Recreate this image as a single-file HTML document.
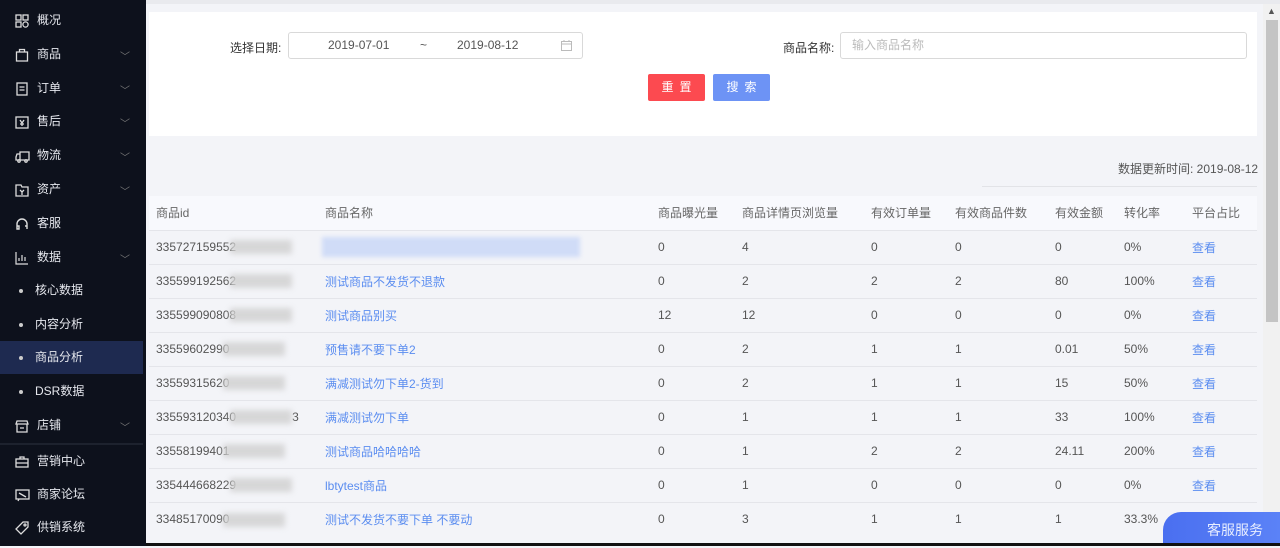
<!DOCTYPE html>
<html><head><meta charset="utf-8"><style>
*{margin:0;padding:0;box-sizing:border-box}
body{width:1280px;height:546px;overflow:hidden;background:#f3f4f8;font-family:"Liberation Sans","Noto Sans CJK SC",sans-serif;font-size:12px;color:#555;position:relative}
#side{position:absolute;left:0;top:0;width:146px;height:546px;background:#0d111c;color:#e6e8ee;font-size:12px}
.it{position:absolute;left:0;width:143px;height:33px;line-height:33px}
.it svg{position:absolute;left:15px;top:10px}
.it .t{position:absolute;left:37px}
.it .ar{position:absolute;left:120px;top:3px;color:#777;font-size:10px}
.sub .t{left:35px}
.sub .dot{position:absolute;left:19px;top:15px;width:4px;height:4px;border-radius:50%;background:#ccc}
.act{background:#1e2a50}
#card{position:absolute;left:149px;top:12px;width:1108px;height:124px;background:#fff}
.lbl{position:absolute;color:#333;font-size:12px}
.inp{position:absolute;border:1px solid #d9d9d9;border-radius:3px;background:#fff;height:27px;line-height:25px}
.btn{position:absolute;height:27px;line-height:27px;color:#fff;text-align:center;border-radius:2px;font-size:12px;letter-spacing:6px;text-indent:6px}
table{position:absolute;left:149px;top:196px;width:1108px;border-collapse:collapse;font-size:12px}
th{background:#f8f9fd;font-weight:normal;color:#666;height:34px;text-align:left;padding-left:7px}
td{height:34px;padding-left:7px;border-top:1px solid #e4e5ea;color:#555;white-space:nowrap;position:relative}
td.l{color:#5b8df0}
.bl{display:inline-block;width:62px;height:14px;background:#d2d2d2;filter:blur(3px);vertical-align:middle;margin-left:-6px;opacity:.85}
</style></head><body>
<div id="side">
<div class="it" style="top:4px"><svg width="14" height="14" fill="none" stroke="#ddd" stroke-width="1.3"><rect x="1" y="1" width="5" height="5"/><rect x="8" y="1" width="5" height="5"/><rect x="1" y="8" width="5" height="5"/><circle cx="10.5" cy="10.5" r="2.6"/></svg><span class="t">概况</span></div>
<div class="it" style="top:38px"><svg width="14" height="14" fill="none" stroke="#ddd" stroke-width="1.3"><path d="M1.5 4h11v9h-11z M4.5 4V1.5h5V4"/></svg><span class="t">商品</span><span class="ar">﹀</span></div>
<div class="it" style="top:72px"><svg width="14" height="14" fill="none" stroke="#ddd" stroke-width="1.3"><rect x="2" y="1" width="10" height="12"/><path d="M4.5 5h5M4.5 8h5"/></svg><span class="t">订单</span><span class="ar">﹀</span></div>
<div class="it" style="top:105px"><svg width="14" height="14" fill="none" stroke="#ddd" stroke-width="1.3"><rect x="1" y="2" width="12" height="11"/><path d="M5 5l2 3 2-3M7 8v3M5 9h4"/></svg><span class="t">售后</span><span class="ar">﹀</span></div>
<div class="it" style="top:139px"><svg width="15" height="14" fill="none" stroke="#ddd" stroke-width="1.3"><path d="M5 3h9v8H5zM5 5H2l-1 3v3h4"/><circle cx="4" cy="12" r="1.2"/><circle cx="11" cy="12" r="1.2"/></svg><span class="t">物流</span><span class="ar">﹀</span></div>
<div class="it" style="top:173px"><svg width="14" height="14" fill="none" stroke="#ddd" stroke-width="1.3"><path d="M1 2h5l1 2h6v9H1z M5 7l2 2 2-2M7 9v3"/></svg><span class="t">资产</span><span class="ar">﹀</span></div>
<div class="it" style="top:207px"><svg width="14" height="14" fill="none" stroke="#ddd" stroke-width="1.4"><path d="M2 10V7a5 5 0 0 1 10 0v3M2 9h2v3H2zM10 9h2v3"/></svg><span class="t">客服</span></div>
<div class="it" style="top:241px"><svg width="14" height="14" fill="none" stroke="#ddd" stroke-width="1.2"><path d="M1 1v12h12M4 10V7M7 10V4M10 10V6"/></svg><span class="t">数据</span><span class="ar">﹀</span></div>
<div class="it sub" style="top:274px"><span class="dot"></span><span class="t">核心数据</span></div>
<div class="it sub" style="top:308px"><span class="dot"></span><span class="t">内容分析</span></div>
<div class="it sub act" style="top:341px"><span class="dot"></span><span class="t">商品分析</span></div>
<div class="it sub" style="top:375px"><span class="dot"></span><span class="t">DSR数据</span></div>
<div class="it" style="top:409px"><svg width="14" height="14" fill="none" stroke="#ddd" stroke-width="1.3"><path d="M2 2h10l1 3H1zM2 5v8h10V5M5 9h4"/></svg><span class="t">店铺</span><span class="ar">﹀</span></div>
<div style="position:absolute;left:0;top:443px;width:143px;height:2px;background:#1d222e"></div>
<div class="it" style="top:445px"><svg width="14" height="14" fill="none" stroke="#ddd" stroke-width="1.3"><rect x="1" y="4" width="12" height="8"/><path d="M5 4V2h4v2M1 8h12"/></svg><span class="t">营销中心</span></div>
<div class="it" style="top:478px"><svg width="15" height="14" fill="none" stroke="#ddd" stroke-width="1.3"><rect x="1" y="2" width="13" height="9"/><path d="M4 11l-1 2M4 5l7 4"/></svg><span class="t">商家论坛</span></div>
<div class="it" style="top:511px"><svg width="14" height="14" fill="none" stroke="#ddd" stroke-width="1.3"><path d="M8 1h5v5l-7 7-5-5z"/><circle cx="10" cy="4" r="1"/></svg><span class="t">供销系统</span></div>
</div>
<div style="position:absolute;left:146px;top:0;width:1134px;height:4px;background:#e9eaee"></div>
<div id="card">
<span class="lbl" style="left:81px;top:27px">选择日期:</span>
<div class="inp" style="left:139px;top:20px;width:295px"><span style="position:absolute;left:39px">2019-07-01</span><span style="position:absolute;left:131px">~</span><span style="position:absolute;left:168px">2019-08-12</span><svg style="position:absolute;left:272px;top:7px" width="11" height="11" fill="none" stroke="#bbb"><rect x=".5" y="1.5" width="10" height="9"/><path d="M.5 4h10M3 0v2M8 0v2"/></svg></div>
<span class="lbl" style="left:634px;top:27px">商品名称:</span>
<div class="inp" style="left:691px;top:20px;width:407px;color:#bbb"><span style="position:absolute;left:11px">输入商品名称</span></div>
<div class="btn" style="left:499px;top:62px;width:57px;background:#fc4a50">重置</div>
<div class="btn" style="left:564px;top:62px;width:57px;background:#6d93f5">搜索</div>
</div>
<div style="position:absolute;left:1118px;top:160px;color:#555;font-size:12px">数据更新时间: 2019-08-12</div>
<div style="position:absolute;left:982px;top:186px;width:275px;height:1px;background:#e2e3e7"></div>
<table>
<tr><th style="width:169px">商品id</th><th style="width:333px">商品名称</th><th style="width:84px">商品曝光量</th><th style="width:129px">商品详情页浏览量</th><th style="width:84px">有效订单量</th><th style="width:100px">有效商品件数</th><th style="width:69px">有效金额</th><th style="width:68px">转化率</th><th>平台占比</th></tr>
<tr><td>335727159552<span class="bl"></span></td><td class="l"><span style="display:inline-block;width:258px;height:20px;background:#d0dcf7;filter:blur(2px);margin-left:-3px;vertical-align:middle"></span></td><td>0</td><td>4</td><td>0</td><td>0</td><td>0</td><td>0%</td><td class="l">查看</td></tr>
<tr><td>335599192562<span class="bl"></span></td><td class="l">测试商品不发货不退款</td><td>0</td><td>2</td><td>2</td><td>2</td><td>80</td><td>100%</td><td class="l">查看</td></tr>
<tr><td>335599090808<span class="bl"></span></td><td class="l">测试商品别买</td><td>12</td><td>12</td><td>0</td><td>0</td><td>0</td><td>0%</td><td class="l">查看</td></tr>
<tr><td>33559602990<span class="bl"></span></td><td class="l">预售请不要下单2</td><td>0</td><td>2</td><td>1</td><td>1</td><td>0.01</td><td>50%</td><td class="l">查看</td></tr>
<tr><td>33559315620<span class="bl"></span></td><td class="l">满减测试勿下单2-货到</td><td>0</td><td>2</td><td>1</td><td>1</td><td>15</td><td>50%</td><td class="l">查看</td></tr>
<tr><td>335593120340<span class="bl"></span>3</td><td class="l">满减测试勿下单</td><td>0</td><td>1</td><td>1</td><td>1</td><td>33</td><td>100%</td><td class="l">查看</td></tr>
<tr><td>33558199401<span class="bl"></span></td><td class="l">测试商品哈哈哈哈</td><td>0</td><td>1</td><td>2</td><td>2</td><td>24.11</td><td>200%</td><td class="l">查看</td></tr>
<tr><td>335444668229<span class="bl"></span></td><td class="l">lbtytest商品</td><td>0</td><td>1</td><td>0</td><td>0</td><td>0</td><td>0%</td><td class="l">查看</td></tr>
<tr><td>33485170090<span class="bl"></span></td><td class="l">测试不发货不要下单 不要动</td><td>0</td><td>3</td><td>1</td><td>1</td><td>1</td><td>33.3%</td><td class="l"></td></tr>
</table>
<div style="position:absolute;left:1263px;top:4px;width:17px;height:542px;background:#f1f1f1"></div>
<div style="position:absolute;left:1266px;top:20px;width:12px;height:302px;background:#c4c4c4"></div>
<div style="position:absolute;left:1267px;top:6px;font-size:9px;color:#555">▲</div>
<div style="position:absolute;left:1163px;top:512px;width:117px;height:34px;background:linear-gradient(90deg,#4a6ff0,#5b82f7);border-radius:18px 0 0 0;color:#e8eeff;font-size:14px;line-height:36px;padding-left:44px">客服服务</div>
<div style="position:absolute;left:146px;top:543px;width:1134px;height:3px;background:#111"></div>
</body></html>
